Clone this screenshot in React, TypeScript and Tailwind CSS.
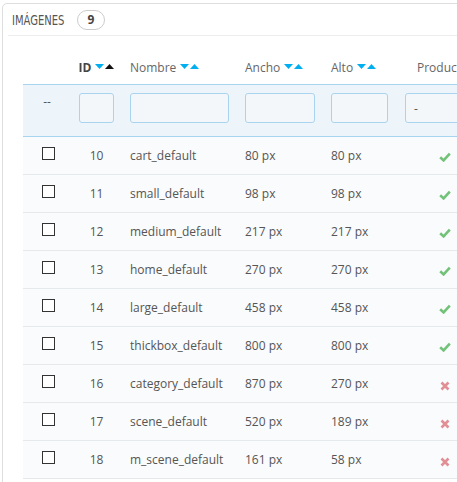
const rows = [
  { id: 10, name: 'cart_default', w: 80, h: 80, ok: true },
  { id: 11, name: 'small_default', w: 98, h: 98, ok: true },
  { id: 12, name: 'medium_default', w: 217, h: 217, ok: true },
  { id: 13, name: 'home_default', w: 270, h: 270, ok: true },
  { id: 14, name: 'large_default', w: 458, h: 458, ok: true },
  { id: 15, name: 'thickbox_default', w: 800, h: 800, ok: true },
  { id: 16, name: 'category_default', w: 870, h: 270, ok: false },
  { id: 17, name: 'scene_default', w: 520, h: 189, ok: false },
  { id: 18, name: 'm_scene_default', w: 161, h: 58, ok: false },
];

function SortArrows({ active }: { active?: boolean }) {
  return (
    <span className="ml-[4px] inline-flex gap-[1px] -translate-y-[2px]">
      <svg width="9" height="5" viewBox="0 0 9 5">
        <path d="M0 0h9L4.5 5z" className="fill-[#00aff0]" />
      </svg>
      <svg width="9" height="5" viewBox="0 0 9 5">
        <path d="M0 5h9L4.5 0z" className={active ? 'fill-[#111]' : 'fill-[#00aff0]'} />
      </svg>
    </span>
  );
}

function Check() {
  return (
    <svg width="12" height="10" viewBox="0 0 12 10" className="translate-y-[1px]">
      <path d="M1.2 5.2 4.6 8.4 10.8 1.6" fill="none" stroke="#72c279" strokeWidth="2.6" />
    </svg>
  );
}

function Cross() {
  return (
    <svg width="10" height="10" viewBox="0 0 10 10" className="translate-y-[2px]">
      <path d="M1.5 1.5 8.5 8.5M8.5 1.5 1.5 8.5" fill="none" stroke="#e08f95" strokeWidth="2.6" />
    </svg>
  );
}

export default function App() {
  return (
    <div className="w-[457px] h-[482px] overflow-hidden bg-white font-['Open_Sans',sans-serif] text-[12px] text-[#555]">
      <div className="ml-[2px] mt-[3px] w-[600px] h-[520px] border border-[#dedede] rounded-tl-[5px]">
        {/* panel heading: condensed title */}
        <div className="ml-[5px] h-[32px] pl-[4px] flex items-center border-b border-[#eee]">
          <span className="font-['DejaVu_Sans',sans-serif] text-[13.5px] text-[#555] uppercase scale-x-[0.74] origin-left -mr-[18px] translate-y-[1px]">
            Imágenes
          </span>
          <span className="ml-[12px] w-[28px] h-[20px] rounded-full border border-[#ccc] flex items-center justify-center text-[12px] font-bold text-[#444]">
            9
          </span>
        </div>

        <div className="ml-[20px] mt-[16px]">
          {/* column titles */}
          <div className="flex h-[32px] items-center leading-[18px] text-[#666]">
            <div className="w-[48px]" />
            <div className="w-[51px] flex justify-center items-center font-bold text-[#444]">
              ID<SortArrows active />
            </div>
            <div className="w-[115px] pl-[8px] flex items-center">
              Nombre<SortArrows />
            </div>
            <div className="w-[86px] pl-[8px] flex items-center">
              Ancho<SortArrows />
            </div>
            <div className="w-[75px] pl-[8px] flex items-center">
              Alto<SortArrows />
            </div>
            <div className="w-[94px] pl-[19px] whitespace-nowrap">Productos</div>
          </div>

          {/* filter row */}
          <div className="flex h-[53px] bg-[#edf5fb] border-y border-[#a7d4ef] pt-[8px] leading-[18px]">
            <div className="w-[48px] text-center">--</div>
            <div className="w-[51px] pl-[8px]">
              <div className="w-[35px] h-[30px] rounded-[3px] border border-[#a9d3ee] bg-[#f4f7f9]" />
            </div>
            <div className="w-[115px] pl-[8px]">
              <div className="w-[99px] h-[30px] rounded-[3px] border border-[#a9d3ee] bg-[#f4f7f9]" />
            </div>
            <div className="w-[86px] pl-[8px]">
              <div className="w-[70px] h-[30px] rounded-[3px] border border-[#a9d3ee] bg-[#f4f7f9]" />
            </div>
            <div className="w-[75px] pl-[8px]">
              <div className="w-[57px] h-[30px] rounded-[3px] border border-[#a9d3ee] bg-[#f4f7f9]" />
            </div>
            <div className="w-[94px] pl-[7px]">
              <div className="w-[80px] h-[30px] rounded-[3px] border border-[#a9d3ee] bg-[#f4f7f9] flex items-center pl-[8px] pt-[2px]">
                -
              </div>
            </div>
          </div>

          {/* data rows */}
          {rows.map(r => (
            <div key={r.id} className="flex h-[38px] items-center bg-[#fafbfc] border-b border-[#e6e9ec] leading-[18px]">
              <div className="w-[48px] flex justify-center">
                <span className="block w-[13px] h-[13px] border border-[#333] bg-white -translate-y-[2px] translate-x-[1px]" />
              </div>
              <div className="w-[51px] text-center">{r.id}</div>
              <div className="w-[115px] pl-[8px] whitespace-nowrap">{r.name}</div>
              <div className="w-[86px] pl-[8px]">{r.w} px</div>
              <div className="w-[75px] pl-[8px]">{r.h} px</div>
              <div className="w-[94px] flex justify-center">
                {r.ok ? <Check /> : <Cross />}
              </div>
            </div>
          ))}
        </div>
      </div>
    </div>
  );
}
